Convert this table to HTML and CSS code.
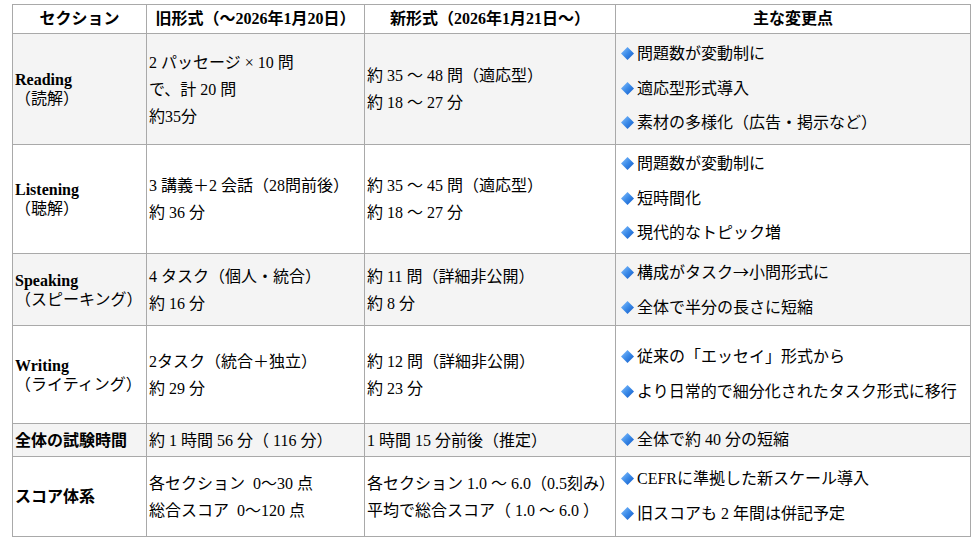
FILE: index.html
```html
<!DOCTYPE html>
<html lang="ja">
<head>
<meta charset="utf-8">
<title>TOEFL 新旧形式比較</title>
<link rel="stylesheet" href="styles.css">
</head>
<body>
<svg width="0" height="0" class="defs">
  <defs>
    <linearGradient id="dg" x1="0" y1="0" x2="1" y2="1">
      <stop offset="0" stop-color="#8cc4ff"/>
      <stop offset="0.5" stop-color="#3a8ae8"/>
      <stop offset="1" stop-color="#1257c4"/>
    </linearGradient>
  </defs>
</svg>
<table class="cmp">
  <colgroup>
    <col class="c1"><col class="c2"><col class="c3"><col class="c4">
  </colgroup>
  <thead>
    <tr class="r-head">
      <th>セクション</th>
      <th>旧形式（〜2026年1月20日）</th>
      <th>新形式（2026年1月21日〜）</th>
      <th>主な変更点</th>
    </tr>
  </thead>
  <tbody>
    <tr class="r-read alt">
      <td class="sec"><b>Reading</b><span class="sub">（読解）</span></td>
      <td class="lines"><div>2 パッセージ × 10 問</div><div>で、計 20 問</div><div>約35分</div></td>
      <td class="lines"><div>約 35 〜 48 問（適応型）</div><div>約 18 〜 27 分</div></td>
      <td class="pts">
        <div><svg class="dia" viewBox="0 0 13 13"><polygon points="6.5,0 13,6.5 6.5,13 0,6.5" fill="url(#dg)"/></svg>問題数が変動制に</div>
        <div><svg class="dia" viewBox="0 0 13 13"><polygon points="6.5,0 13,6.5 6.5,13 0,6.5" fill="url(#dg)"/></svg>適応型形式導入</div>
        <div><svg class="dia" viewBox="0 0 13 13"><polygon points="6.5,0 13,6.5 6.5,13 0,6.5" fill="url(#dg)"/></svg>素材の多様化（広告・掲示など）</div>
      </td>
    </tr>
    <tr class="r-listen">
      <td class="sec"><b>Listening</b><span class="sub">（聴解）</span></td>
      <td class="lines"><div>3 講義＋2 会話（28問前後）</div><div>約 36 分</div></td>
      <td class="lines"><div>約 35 〜 45 問（適応型）</div><div>約 18 〜 27 分</div></td>
      <td class="pts">
        <div><svg class="dia" viewBox="0 0 13 13"><polygon points="6.5,0 13,6.5 6.5,13 0,6.5" fill="url(#dg)"/></svg>問題数が変動制に</div>
        <div><svg class="dia" viewBox="0 0 13 13"><polygon points="6.5,0 13,6.5 6.5,13 0,6.5" fill="url(#dg)"/></svg>短時間化</div>
        <div><svg class="dia" viewBox="0 0 13 13"><polygon points="6.5,0 13,6.5 6.5,13 0,6.5" fill="url(#dg)"/></svg>現代的なトピック増</div>
      </td>
    </tr>
    <tr class="r-speak alt">
      <td class="sec"><b>Speaking</b><span class="sub">（スピーキング）</span></td>
      <td class="lines"><div>4 タスク（個人・統合）</div><div>約 16 分</div></td>
      <td class="lines"><div>約 11 問（詳細非公開）</div><div>約 8 分</div></td>
      <td class="pts">
        <div><svg class="dia" viewBox="0 0 13 13"><polygon points="6.5,0 13,6.5 6.5,13 0,6.5" fill="url(#dg)"/></svg>構成がタスク<span class="cjk">→</span>小問形式に</div>
        <div><svg class="dia" viewBox="0 0 13 13"><polygon points="6.5,0 13,6.5 6.5,13 0,6.5" fill="url(#dg)"/></svg>全体で半分の長さに短縮</div>
      </td>
    </tr>
    <tr class="r-write">
      <td class="sec"><b>Writing</b><span class="sub">（ライティング）</span></td>
      <td class="lines"><div>2タスク（統合＋独立）</div><div>約 29 分</div></td>
      <td class="lines"><div>約 12 問（詳細非公開）</div><div>約 23 分</div></td>
      <td class="pts">
        <div><svg class="dia" viewBox="0 0 13 13"><polygon points="6.5,0 13,6.5 6.5,13 0,6.5" fill="url(#dg)"/></svg>従来の「エッセイ」形式から</div>
        <div><svg class="dia" viewBox="0 0 13 13"><polygon points="6.5,0 13,6.5 6.5,13 0,6.5" fill="url(#dg)"/></svg>より日常的で細分化されたタスク形式に移行</div>
      </td>
    </tr>
    <tr class="r-total alt">
      <td class="sec"><b>全体の試験時間</b></td>
      <td class="lines"><div>約 1 時間 56 分（ 116 分）</div></td>
      <td class="lines"><div>1 時間 15 分前後（推定）</div></td>
      <td class="pts pts-single">
        <div><svg class="dia" viewBox="0 0 13 13"><polygon points="6.5,0 13,6.5 6.5,13 0,6.5" fill="url(#dg)"/></svg>全体で約 40 分の短縮</div>
      </td>
    </tr>
    <tr class="r-score">
      <td class="sec"><b>スコア体系</b></td>
      <td class="lines"><div>各セクション&nbsp; 0〜30 点</div><div>総合スコア&nbsp; 0〜120 点</div></td>
      <td class="lines"><div>各セクション 1.0 〜 6.0（0.5刻み）</div><div>平均で総合スコア（ 1.0 〜 6.0 ）</div></td>
      <td class="pts">
        <div><svg class="dia" viewBox="0 0 13 13"><polygon points="6.5,0 13,6.5 6.5,13 0,6.5" fill="url(#dg)"/></svg>CEFRに準拠した新スケール導入</div>
        <div><svg class="dia" viewBox="0 0 13 13"><polygon points="6.5,0 13,6.5 6.5,13 0,6.5" fill="url(#dg)"/></svg>旧スコアも 2 年間は併記予定</div>
      </td>
    </tr>
  </tbody>
</table>
</body>
</html>
```

FILE: styles.css
```css
html, body {
  margin: 0;
  padding: 0;
  background: #ffffff;
}

body {
  padding: 4px 0 0 12px;
  font-family: "Liberation Serif", "Noto Sans CJK JP", serif;
  font-size: 16px;
  color: #000;
}

.defs {
  position: absolute;
  width: 0;
  height: 0;
}

.cjk {
  font-family: "Noto Sans CJK JP", sans-serif;
}

.cmp {
  border-collapse: collapse;
  table-layout: fixed;
  width: 958px;
}

.c1 { width: 134px; }
.c2 { width: 218px; }
.c3 { width: 251px; }
.c4 { width: 355px; }

.cmp th,
.cmp td {
  border: 1px solid #a9a9a9;
  padding: 0 2px;
  vertical-align: middle;
  text-align: left;
}

.cmp th {
  font-weight: bold;
  text-align: center;
  line-height: 20px;
}

.alt td {
  background: #f4f4f4;
}

.r-head { height: 29px; }
.r-read { height: 111px; }
.r-listen { height: 109px; }
.r-speak { height: 72px; }
.r-write { height: 98px; }
.r-total { height: 33px; }
.r-score { height: 80px; }

.sec {
  line-height: 19px;
}

.sec b {
  display: block;
}

.sub {
  display: block;
}

.lines div {
  line-height: 27px;
  white-space: nowrap;
}

.cmp td.pts {
  padding-left: 5px;
}

.pts div {
  line-height: 34.5px;
  white-space: nowrap;
}

.pts-single div {
  line-height: 26px;
}

.dia {
  width: 13px;
  height: 13px;
  vertical-align: -1px;
  margin-right: 3px;
}
```
